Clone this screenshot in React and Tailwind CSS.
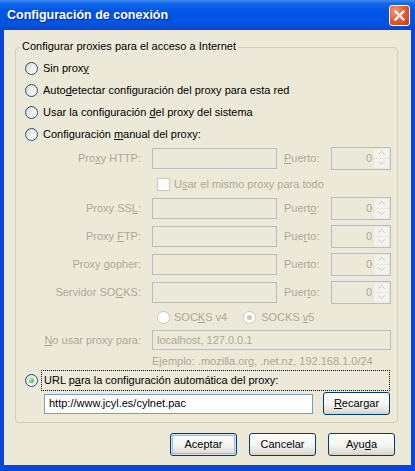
const DIS = "text-[#aca899]";

function Radio({ checked, disabled }) {
  return (
    <span
      className={`flex items-center justify-center w-[13px] h-[13px] shrink-0 rounded-full border ${
        disabled
          ? "border-[#cac8bb] bg-white"
          : "border-[#1c5180] bg-[linear-gradient(135deg,#d6d3ca_0%,#eeede8_45%,#ffffff_100%)]"
      }`}
    >
      {checked && (
        <span
          className={`w-[5px] h-[5px] rounded-full ${
            disabled ? "bg-[#cac8bb]" : "bg-[radial-gradient(circle_at_35%_35%,#b4f0b1,#21a121)]"
          }`}
        />
      )}
    </span>
  );
}

function Arrow({ up }) {
  return (
    <svg width="7" height="4" viewBox="0 0 7 4">
      <path d={up ? "M0.5 3.5 L3.5 0.5 L6.5 3.5" : "M0.5 0.5 L3.5 3.5 L6.5 0.5"} fill="none" stroke="#c3c6cc" strokeWidth="1" />
    </svg>
  );
}

function Spinner() {
  return (
    <div className="flex w-[60px] h-[23px] border border-[#b5bdc8] bg-[#ece9d8]">
      <div className={`flex-1 flex items-center justify-end pr-[2px] ${DIS}`}>0</div>
      <div className="w-[16px] flex flex-col gap-px py-px pr-px">
        <div className="flex-1 flex items-center justify-center bg-[#f3f2ec] rounded-[2px]">
          <Arrow up />
        </div>
        <div className="flex-1 flex items-center justify-center bg-[#f3f2ec] rounded-[2px]">
          <Arrow />
        </div>
      </div>
    </div>
  );
}

function ProxyRow({ label, port, mt }) {
  return (
    <div className={`flex items-center h-[24px] ${mt}`}>
      <div className={`w-[125px] text-right ${DIS}`}>{label}</div>
      <div className="ml-[11px] w-[125px] h-[21px] border border-[#b5bdc8]" />
      <div className={`ml-[7px] w-[47px] ${DIS}`}>{port}</div>
      <Spinner />
    </div>
  );
}

function Button({ children, def }) {
  return (
    <div
      className={`flex items-center justify-center w-[67px] h-[23px] rounded-[3px] border border-[#003c74] bg-[linear-gradient(to_bottom,#ffffff_0%,#f4f4f0_55%,#e3e0d6_85%,#d6d0c5_100%)] ${
        def ? "shadow-[inset_0_0_0_1px_#cee7ff,inset_0_0_0_2px_#98b8ea]" : ""
      }`}
    >
      {children}
    </div>
  );
}

function App() {
  return (
    <div className="w-[415px] h-[471px] flex flex-col bg-[#0a46da] font-['Liberation_Sans',Arial,sans-serif] text-[11px] text-black leading-none">
      <div className="h-[30px] shrink-0 flex items-center justify-between pl-[7px] pr-[5px] bg-[linear-gradient(to_bottom,#3f8cf3_0%,#1366ec_12%,#0055e5_35%,#0053e1_80%,#0047d3_100%)]">
        <span className="font-bold text-[12.5px] text-white [text-shadow:1px_1px_#0b2a8a]">
          Configuración de conexión
        </span>
        <div className="w-[21px] h-[21px] flex items-center justify-center rounded-[3px] border border-white bg-[radial-gradient(circle_at_30%_30%,#f09a78,#e0582e_55%,#c23a14)]">
          <svg width="11" height="11" viewBox="0 0 11 11">
            <path d="M1.5 1.5 L9.5 9.5 M9.5 1.5 L1.5 9.5" stroke="white" strokeWidth="2.2" strokeLinecap="square" />
          </svg>
        </div>
      </div>

      <div className="flex-1 flex flex-col mx-[4px] mb-[6px] bg-[#ece9d8]">
        <div className="relative ml-[11px] mt-[17px] w-[383px] h-[376px] border border-[#d0d0bf] rounded-[4px]">
          <span className="absolute -top-[7px] left-[4px] px-[2px] bg-[#ece9d8]">
            Configurar proxies para el acceso a Internet
          </span>

          <div className="flex flex-col pt-[9px]">
            <div className="flex items-center h-[22px] pl-[9px] gap-[5px]">
              <Radio />
              <span>
                Sin prox<u>y</u>
              </span>
            </div>
            <div className="flex items-center h-[22px] pl-[9px] gap-[5px]">
              <Radio />
              <span>
                Auto<u>d</u>etectar configuración del proxy para esta red
              </span>
            </div>
            <div className="flex items-center h-[22px] pl-[9px] gap-[5px]">
              <Radio />
              <span>
                Usar la configuración <u>d</u>el proxy del sistema
              </span>
            </div>
            <div className="flex items-center h-[22px] pl-[9px] gap-[5px]">
              <Radio />
              <span>
                Configuración <u>m</u>anual del proxy:
              </span>
            </div>

            <ProxyRow
              mt="mt-[1px]"
              label={<>Pro<u>x</u>y HTTP:</>}
              port={<><u>P</u>uerto:</>}
            />
            <div className="flex items-center h-[20px] mt-[4px] pl-[141px] gap-[4px]">
              <span className="w-[13px] h-[13px] border border-[#cac8bb] bg-white" />
              <span className={DIS}>
                U<u>s</u>ar el mismo proxy para todo
              </span>
            </div>
            <ProxyRow
              mt="mt-[2px]"
              label={<>Proxy SS<u>L</u>:</>}
              port={<>Puert<u>o</u>:</>}
            />
            <ProxyRow
              mt="mt-[4px]"
              label={<>Proxy <u>F</u>TP:</>}
              port={<>Pue<u>r</u>to:</>}
            />
            <ProxyRow mt="mt-[4px]" label={<>Proxy <u>g</u>opher:</>} port="Puerto:" />
            <ProxyRow
              mt="mt-[4px]"
              label={<>Servidor SO<u>C</u>KS:</>}
              port={<>Puer<u>t</u>o:</>}
            />

            <div className={`flex items-center h-[20px] mt-[3px] pl-[141px] ${DIS}`}>
              <Radio disabled />
              <span className="ml-[4px]">
                SOC<u>K</u>S v4
              </span>
              <span className="ml-[16px]">
                <Radio disabled checked />
              </span>
              <span className="ml-[5px]">
                SOCKS <u>v</u>5
              </span>
            </div>

            <div className="flex items-center h-[22px] mt-[2px]">
              <div className={`w-[125px] text-right ${DIS}`}>
                <u>N</u>o usar proxy para:
              </div>
              <div className={`ml-[11px] w-[239px] h-[20px] flex items-center pl-[4px] border border-[#b5bdc8] ${DIS}`}>
                localhost, 127.0.0.1
              </div>
            </div>
            <div className={`flex items-center h-[16px] mt-[2px] pl-[136px] ${DIS}`}>
              Ejemplo: .mozilla.org, .net.nz, 192.168.1.0/24
            </div>

            <div className="flex items-center h-[21px] mt-[1px] pl-[9px] pr-[7px]">
              <Radio checked />
              <span className="ml-[3px] flex-1 h-[21px] flex items-center pl-[2px] border border-dotted border-black">
                URL p<u>a</u>ra la configuración automática del proxy:
              </span>
            </div>
            <div className="flex items-center h-[23px] mt-[1px] pl-[28px]">
              <div className="w-[269px] h-[20px] flex items-center pl-[4px] border border-[#7f9db9] bg-white">
                http://www.jcyl.es/cylnet.pac
              </div>
              <div className="ml-[10px]">
                <Button>
                  <span>
                    <u>R</u>ecargar
                  </span>
                </Button>
              </div>
            </div>
          </div>
        </div>

        <div className="flex justify-end gap-[12px] mt-[10px] pr-[16px]">
          <Button def>Aceptar</Button>
          <Button>Cancelar</Button>
          <Button>
            <span>
              Ayu<u>d</u>a
            </span>
          </Button>
        </div>
      </div>
    </div>
  );
}

export default App;
